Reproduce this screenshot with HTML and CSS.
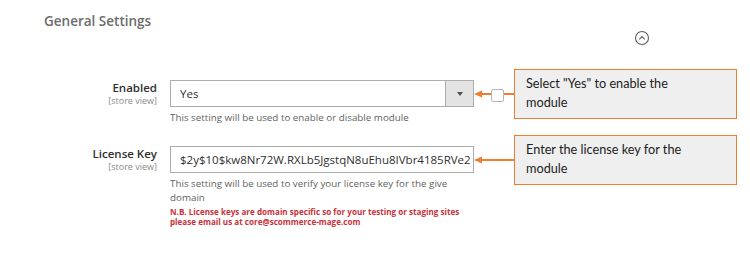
FILE: index.html
```html
<!doctype html>
<html>
<head>
    <meta charset="utf-8" />
    <title>General Settings</title>
    <link rel="stylesheet" href="styles.css">
</head>
<body>
<div id="config">
    <h2 class="section-title">General Settings</h2>
    <div class="toggle-row">
        <svg class="toggle" width="16" height="16" viewBox="0 0 16 16">
            <circle cx="8" cy="8" r="6.5" fill="none" stroke="#5e5e5e" stroke-width="1.1"/>
            <path d="M5.3 9.3 L8 6.6 L10.7 9.3" fill="none" stroke="#5e5e5e" stroke-width="1.2"/>
        </svg>
    </div>

    <div class="field">
        <div class="label">
            <span class="name">Enabled</span>
            <span class="scope">[store view]</span>
        </div>
        <div class="control">
            <div class="line">
                <div class="select">
                    <span class="value">Yes</span>
                    <span class="caret"><i></i></span>
                </div>
                <div class="pointer">
                    <svg width="17" height="8" viewBox="0 0 17 8"><path d="M0 4 L8 0.5 L8 3 L17 3 L17 5 L8 5 L8 7.5 Z" fill="#ed7d31"/></svg>
                    <span class="checkbox"></span>
                    <span class="wire short"></span>
                </div>
                <div class="callout">Select "Yes" to enable the module</div>
            </div>
            <p class="note">This setting will be used to enable or disable module</p>
        </div>
    </div>

    <div class="field second">
        <div class="label">
            <span class="name">License Key</span>
            <span class="scope">[store view]</span>
        </div>
        <div class="control">
            <div class="line">
                <div class="input">$2y$10$kw8Nr72W.RXLb5JgstqN8uEhu8IVbr4185RVe2</div>
                <div class="pointer">
                    <svg width="17" height="8" viewBox="0 0 17 8"><path d="M0 4 L8 0.5 L8 3 L17 3 L17 5 L8 5 L8 7.5 Z" fill="#ed7d31"/></svg>
                    <span class="wire long"></span>
                </div>
                <div class="callout">Enter the license key for the module</div>
            </div>
            <p class="note">This setting will be used to verify your license key for the give domain</p>
            <p class="warning">N.B. License keys are domain specific so for your testing or staging sites please email us at core@scommerce-mage.com</p>
        </div>
    </div>
</div>
</body>
</html>
```

FILE: styles.css
```css
*{
    margin:0px;
    padding:0px;
    box-sizing:border-box;
}
html,body{
    width:100%;
    height:100%;
    background-color:#fff;
    font-family:'Open Sans', 'Liberation Sans', sans-serif;
    color:#333;
}
#config{
    padding-top:11px;
}
.section-title{
    padding-left:44px;
    font-size:13.5px;
    line-height:20px;
    font-weight:600;
    color:#6b6b6b;
}
.toggle-row{
    padding-left:634px;
    height:16px;
    margin-top:-1px;
}
.toggle{
    display:block;
}
.field{
    display:flex;
    margin-top:34px;
}
.field.second{
    margin-top:21px;
}
.label{
    width:157px;
    text-align:right;
    margin-right:13px;
}
.label .name{
    display:block;
    font-size:11.5px;
    font-weight:600;
    line-height:16px;
    color:#303030;
}
.label .scope{
    display:block;
    font-size:9px;
    line-height:10px;
    color:#8a8a8a;
}
.control{
    width:580px;
}
.line{
    display:flex;
    align-items:center;
    height:27px;
}
.select,.input{
    width:304px;
    height:27px;
    border:1px solid #adadad;
    font-size:11.5px;
    color:#303030;
    flex-shrink:0;
}
.select{
    display:flex;
}
.select .value{
    flex:1;
    padding-left:9px;
    line-height:25px;
}
.select .caret{
    width:28px;
    border-left:1px solid #adadad;
    background-color:#e3e3e3;
    display:flex;
    align-items:center;
    justify-content:center;
}
.select .caret i{
    width:0;
    height:0;
    border-left:3.5px solid transparent;
    border-right:3.5px solid transparent;
    border-top:4px solid #505050;
}
.input{
    padding-left:9px;
    line-height:25px;
    white-space:nowrap;
    overflow:hidden;
}
.pointer{
    width:40px;
    display:flex;
    align-items:center;
    flex-shrink:0;
}
.pointer svg{
    display:block;
}
.checkbox{
    width:13px;
    height:13px;
    border:1px solid #b5b5b5;
    border-radius:2px;
    background:#fff;
    margin-top:3px;
}
.wire{
    height:2px;
    background-color:#ed7d31;
}
.wire.short{
    width:10px;
}
.wire.long{
    width:23px;
}
.callout{
    width:223px;
    height:50px;
    flex-shrink:0;
    border:1px solid #ed7d31;
    background-color:#efefef;
    padding:4px 30px 0 11px;
    font-family:Lato, 'Liberation Sans', sans-serif;
    font-size:12.7px;
    line-height:19px;
    color:#222;
}
.note{
    margin-top:4px;
    width:290px;
    font-size:9.8px;
    line-height:14px;
    color:#5f5f5f;
}
.warning{
    margin-top:2px;
    width:300px;
    font-size:8.1px;
    line-height:10px;
    font-weight:700;
    color:#c8323a;
}
```
